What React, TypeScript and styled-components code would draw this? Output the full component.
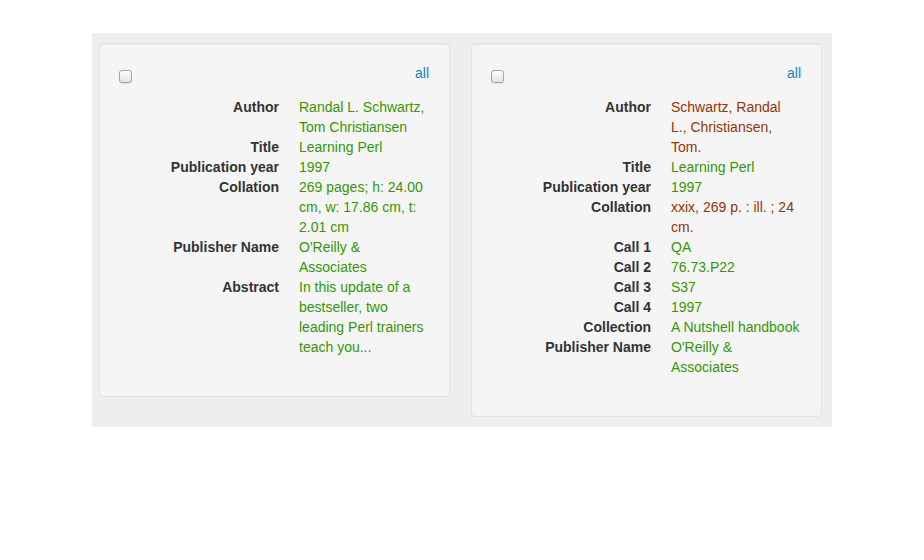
import React from "react";
import styled, { createGlobalStyle } from "styled-components";

const GlobalStyle = createGlobalStyle`
    body {
        margin: 0;
        background: #fff;
        font-family: "Liberation Sans", Arial, sans-serif;
        font-size: 14px;
        line-height: 20px;
        color: #333;
    }
`;

interface Field {
    label: string;
    // one entry per displayed line, wrapped as in the source record view
    lines: string[];
    differs?: boolean;
}

const leftRecord: Field[] = [
    { label: "Author", lines: ["Randal L. Schwartz,", "Tom Christiansen"] },
    { label: "Title", lines: ["Learning Perl"] },
    { label: "Publication year", lines: ["1997"] },
    { label: "Collation", lines: ["269 pages; h: 24.00", "cm, w: 17.86 cm, t:", "2.01 cm"] },
    { label: "Publisher Name", lines: ["O'Reilly &", "Associates"] },
    { label: "Abstract", lines: ["In this update of a", "bestseller, two", "leading Perl trainers", "teach you..."] },
];

const rightRecord: Field[] = [
    { label: "Author", lines: ["Schwartz, Randal", "L., Christiansen,", "Tom."], differs: true },
    { label: "Title", lines: ["Learning Perl"] },
    { label: "Publication year", lines: ["1997"] },
    { label: "Collation", lines: ["xxix, 269 p. : ill. ; 24", "cm."], differs: true },
    { label: "Call 1", lines: ["QA"] },
    { label: "Call 2", lines: ["76.73.P22"] },
    { label: "Call 3", lines: ["S37"] },
    { label: "Call 4", lines: ["1997"] },
    { label: "Collection", lines: ["A Nutshell handbook"] },
    { label: "Publisher Name", lines: ["O'Reilly &", "Associates"] },
];

const RecordCard = ({ fields }: { fields: Field[] }) => (
    <Card>
        <CardHeader>
            <Check type="checkbox" />
            <AllLink href="#">all</AllLink>
        </CardHeader>
        <FieldList>
            {fields.map((f) => (
                <React.Fragment key={f.label}>
                    <FieldLabel>{f.label}</FieldLabel>
                    <FieldValue $differs={f.differs}>
                        {f.lines.map((line, i) => (
                            <ValueLine key={i}>{line}</ValueLine>
                        ))}
                    </FieldValue>
                </React.Fragment>
            ))}
        </FieldList>
    </Card>
);

export default function App() {
    return (
        <>
            <GlobalStyle />
            <Compare>
                <RecordCard fields={leftRecord} />
                <RecordCard fields={rightRecord} />
            </Compare>
        </>
    );
}

const Compare = styled.div`
    width: 740px;
    box-sizing: border-box;
    margin: 33px auto 0;
    padding: 10px 10px 10px 7px;
    background: #eeeeee;
    display: grid;
    grid-template-columns: 351px 351px;
    column-gap: 21px;
    align-items: start;
`;

const Card = styled.div`
    box-sizing: border-box;
    padding: 19px;
    background: #f5f5f5;
    border: 1px solid #e3e3e3;
    border-radius: 4px;
    box-shadow: inset 0 1px 1px rgba(0, 0, 0, 0.05);
`;

const CardHeader = styled.div`
    display: flex;
    justify-content: space-between;
    align-items: flex-start;
    height: 20px;
    margin-bottom: 14px;
`;

const Check = styled.input`
    appearance: none;
    width: 13px;
    height: 13px;
    margin: 7px 0 0 0;
    box-sizing: border-box;
    border: 1px solid #a6a6a6;
    border-radius: 3px;
    background: linear-gradient(#ffffff, #f0f0f0 50%, #e2e2e2);
    box-shadow: 0 1px 1px rgba(0, 0, 0, 0.08);
`;

const AllLink = styled.a`
    color: #0088cc;
    text-decoration: none;
    margin-right: 1px;
`;

const FieldList = styled.dl`
    display: grid;
    grid-template-columns: 160px 131px;
    column-gap: 20px;
    margin: 0 0 20px;
`;

const FieldLabel = styled.dt`
    font-weight: bold;
    text-align: right;
    color: #333;
`;

const FieldValue = styled.dd<{ $differs?: boolean }>`
    margin: 0;
    color: ${(p) => (p.$differs ? "#993300" : "#339900")};
`;

const ValueLine = styled.span`
    display: block;
    white-space: nowrap;
`;
